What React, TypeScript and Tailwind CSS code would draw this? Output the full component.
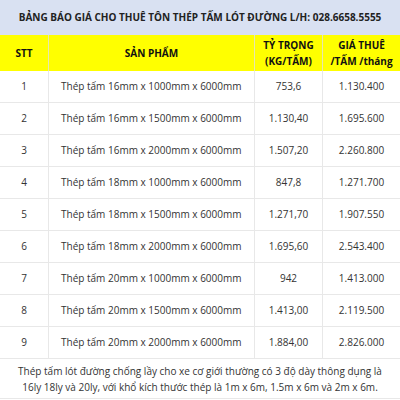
const rows = [
  ["1", "Thép tấm 16mm x 1000mm x 6000mm", "753,6", "1.130.400"],
  ["2", "Thép tấm 16mm x 1500mm x 6000mm", "1.130,40", "1.695.600"],
  ["3", "Thép tấm 16mm x 2000mm x 6000mm", "1.507,20", "2.260.800"],
  ["4", "Thép tấm 18mm x 1000mm x 6000mm", "847,8", "1.271.700"],
  ["5", "Thép tấm 18mm x 1500mm x 6000mm", "1.271,70", "1.907.550"],
  ["6", "Thép tấm 18mm x 2000mm x 6000mm", "1.695,60", "2.543.400"],
  ["7", "Thép tấm 20mm x 1000mm x 6000mm", "942", "1.413.000"],
  ["8", "Thép tấm 20mm x 1500mm x 6000mm", "1.413,00", "2.119.500"],
  ["9", "Thép tấm 20mm x 2000mm x 6000mm", "1.884,00", "2.826.000"],
];

export default function App() {
  return (
    <div className="w-[400px] h-[400px] overflow-hidden bg-white font-['Open_Sans','Noto_Sans',sans-serif] text-[10px] text-[#333]">
      {/* Title */}
      <div className="h-[35px] bg-[#d9e1f2] flex items-center justify-center font-bold text-[#222] whitespace-nowrap">
        BẢNG BÁO GIÁ CHO THUÊ TÔN THÉP TẤM LÓT ĐƯỜNG L/H: 028.6658.5555
      </div>

      {/* Header */}
      <div className="grid grid-cols-[49px_206px_68px_77px] h-[36px] bg-[#ffff00] font-bold text-[#111] leading-[16px]">
        <div className="flex items-center justify-center border-r border-[#e6e6b0]">STT</div>
        <div className="flex items-center justify-center border-r border-[#e6e6b0]">SẢN PHẨM</div>
        <div className="flex items-center justify-center text-center border-r border-[#e6e6b0]">
          TỶ TRỌNG
          <br />
          (KG/TẤM)
        </div>
        <div className="flex items-center justify-center text-center whitespace-nowrap">
          GIÁ THUÊ
          <br />
          /TẤM /tháng
        </div>
      </div>

      {/* Rows */}
      {rows.map((r) => (
        <div key={r[0]} className="grid grid-cols-[49px_206px_68px_77px] h-[32px] border-b border-[#e8e8e8]">
          <div className="flex items-center justify-center border-r border-[#e8e8e8]">{r[0]}</div>
          <div className="flex items-center pl-3 border-r border-[#e8e8e8] whitespace-nowrap">{r[1]}</div>
          <div className="flex items-center justify-center border-r border-[#e8e8e8]">{r[2]}</div>
          <div className="flex items-center justify-center">{r[3]}</div>
        </div>
      ))}

      {/* Footer note */}
      <div className="h-[40px] border-b border-[#e8e8e8] flex items-center justify-center text-center leading-[16px] whitespace-nowrap">
        <p>
          Thép tấm lót đường chống lầy cho xe cơ giới thường có 3 độ dày thông dụng là
          <br />
          16ly 18ly và 20ly, với khổ kích thước thép là 1m x 6m, 1.5m x 6m và 2m x 6m.
        </p>
      </div>
    </div>
  );
}
